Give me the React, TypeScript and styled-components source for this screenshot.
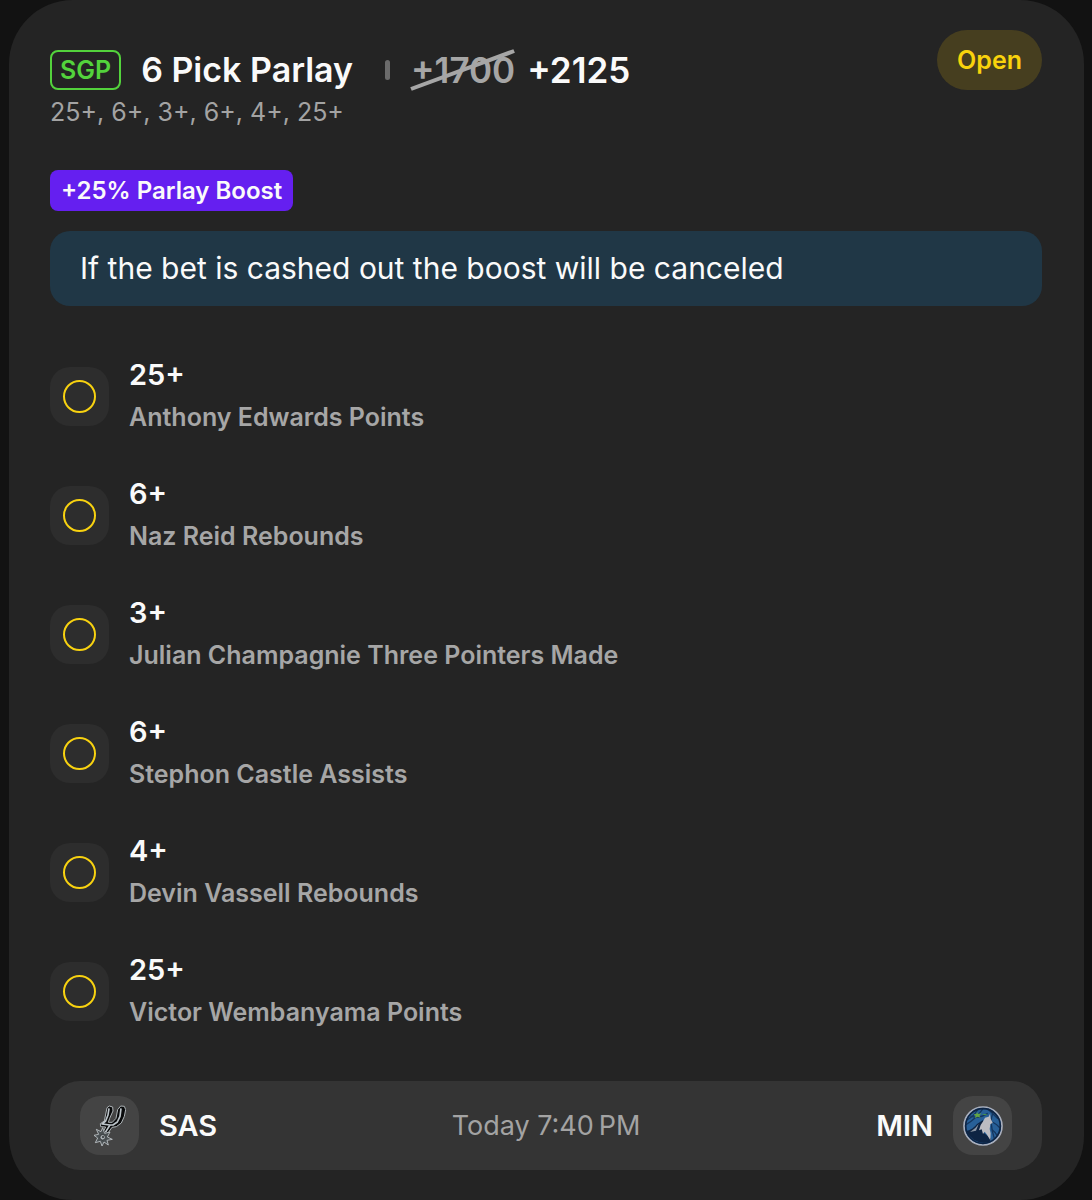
import React from "react";
import styled, { createGlobalStyle } from "styled-components";

const GlobalStyle = createGlobalStyle`
  * { box-sizing: border-box; }
  body {
    margin: 0;
    background: #121212;
    color: #fafafa;
    font-family: Inter, "Liberation Sans", sans-serif;
  }
  h1, h2, p, ul { margin: 0; padding: 0; font-size: inherit; font-weight: inherit; }
`;

const Card = styled.main`
  display: flex;
  flex-direction: column;
  margin: 0 8px 0 9px;
  padding: 30px 42px 30px 41px;
  border-radius: 64px;
  background: #242424;
`;

const Header = styled.header`
  display: flex;
  justify-content: space-between;
  align-items: flex-start;
`;

const Heading = styled.div`
  padding-top: 20px;
`;

const TitleRow = styled.div`
  display: flex;
  align-items: center;
  height: 40px;
`;

const SgpTag = styled.span`
  display: flex;
  align-items: center;
  height: 40px;
  margin-right: 20px;
  padding: 0 8px;
  border: 2px solid #53d33c;
  border-radius: 8px;
  color: #53d33c;
  font-size: 25px;
  font-weight: 600;
`;

const Title = styled.h1`
  font-size: 34px;
  font-weight: 600;
  line-height: 40px;
`;

const Divider = styled.span`
  width: 5px;
  height: 20px;
  margin: 0 21px 0 32px;
  border-radius: 3px;
  background: #6b6b6b;
`;

const Odds = styled.span`
  font-size: 35px;
  font-weight: 600;
  line-height: 40px;
`;

const OldOdds = styled.s`
  position: relative;
  margin-right: 12px;
  color: #a6a6a6;
  font-size: 35px;
  font-weight: 600;
  line-height: 40px;
  text-decoration: none;
`;

const Slash = styled.svg`
  position: absolute;
  inset: 0;
  width: 100%;
  height: 100%;
  overflow: visible;
`;

const Summary = styled.p`
  color: #a3a3a3;
  font-size: 25px;
  line-height: 44px;
`;

const Status = styled.span`
  padding: 0 20px;
  border-radius: 30px;
  background: #463e1f;
  color: #f8d20c;
  font-size: 25px;
  font-weight: 600;
  line-height: 60px;
`;

const Boost = styled.span`
  align-self: flex-start;
  margin-top: 36px;
  padding: 0 11px;
  border-radius: 8px;
  background: #651ff0;
  font-size: 24px;
  font-weight: 600;
  line-height: 41px;
`;

const Notice = styled.p`
  margin-top: 20px;
  padding: 15px 30px;
  border-radius: 20px;
  background: #203746;
  font-size: 30px;
  line-height: 45px;
`;

const Legs = styled.ul`
  display: flex;
  flex-direction: column;
  gap: 35px;
  margin: 48px 0;
  list-style: none;
`;

const Leg = styled.li`
  display: flex;
  align-items: center;
  gap: 20px;
`;

const Tile = styled.span<{ $raised?: boolean }>`
  display: flex;
  flex: none;
  align-items: center;
  justify-content: center;
  width: 59px;
  height: 59px;
  border-radius: 20px;
  background: ${(p) => (p.$raised ? "#444444" : "#2d2d2d")};
`;

const Ring = styled.span`
  width: 33px;
  height: 33px;
  border: 2px solid #f8d210;
  border-radius: 50%;
`;

const LegValue = styled.h2`
  font-size: 29px;
  font-weight: 600;
  line-height: 42px;
`;

const LegMarket = styled.p`
  color: #a6a6a6;
  font-size: 25px;
  font-weight: 600;
  line-height: 42px;
`;

const Game = styled.footer`
  display: grid;
  grid-template-columns: 1fr auto 1fr;
  align-items: center;
  padding: 15px 30px;
  border-radius: 30px;
  background: #343434;
`;

const Team = styled.div<{ $end?: boolean }>`
  display: flex;
  align-items: center;
  justify-content: ${(p) => (p.$end ? "flex-end" : "flex-start")};
  gap: 20px;
  font-size: 29px;
  font-weight: 600;
`;

const GameTime = styled.time`
  color: #a3a3a3;
  font-size: 27px;
`;

const SpursLogo = () => (
  <svg width="32" height="41" viewBox="0 0 96 123" aria-label="San Antonio Spurs" role="img">
    <path
      d="M39 8 46 3 56 6 57 18 47 40 43 52 55 52 66 40 71 14 80 3 91 4 95 14 91 34 82 54 67 65 54 67 39 88 26 84 35 66 20 65 19 56 31 48Z"
      fill="#090a0b"
      stroke="#aeb4b7"
      strokeWidth="3"
      strokeLinejoin="round"
    />
    <path
      d="M45 10 42 30 35 48 24 57 48 60 34 82M81 10 78 34 70 51 57 60 46 60"
      fill="none"
      stroke="#bdc5ca"
      strokeWidth="5"
      strokeLinejoin="round"
    />
    <path
      d="m26 68 6 17 16-4-8 15 15 7-16 3 4 14-13-9-6 12-5-14-15 4 7-14-11-8 14-3-7-15 14 7Z"
      fill="#4b5154"
      stroke="#c2c8cb"
      strokeWidth="2.5"
      strokeLinejoin="round"
    />
    <circle cx="26" cy="97" r="8" fill="#aab1b5" stroke="#25292b" strokeWidth="2" />
    <circle cx="27" cy="96" r="3" fill="#2b2f32" />
  </svg>
);

const WolvesLogo = () => (
  <svg width="40" height="40" viewBox="0 0 120 120" aria-label="Minnesota Timberwolves" role="img">
    <circle cx="60" cy="60" r="57" fill="#286098" stroke="#a9afbd" strokeWidth="5" />
    <path
      d="M12 42Q34 30 45 9M9 56Q40 38 60 8M22 30Q46 40 74 22M90 18Q78 48 94 98M88 48Q104 56 111 66M86 70Q98 80 102 88M74 8Q90 24 105 38"
      fill="none"
      stroke="#14365f"
      strokeWidth="4"
    />
    <path d="M10 75Q30 70 42 54L60 42 62 80 84 98 80 108Q32 118 10 75Z" fill="#0e2443" />
    <circle cx="60" cy="60" r="52" fill="none" stroke="#0e2443" strokeWidth="5" />
    <path
      d="M81 23 83 38 89 50 82 55 80 69 83 82 82 103 72 86 65 77 60 84 56 70 48 73 53 57 61 45 66 35 77 32Z"
      fill="#bcbcc2"
    />
    <path d="M21 78Q38 68 47 54L39 74Z" fill="#8c96a4" />
    <path d="m42 18 3 6 10-2-6 7 4 6-9-3-9 4 3-7-6-5 8 0Z" fill="#65a642" />
    <path d="M57 26Q66 22 73 26L67 28Z" fill="#4d9a49" />
  </svg>
);

const legs = [
  { value: "25+", market: "Anthony Edwards Points" },
  { value: "6+", market: "Naz Reid Rebounds" },
  { value: "3+", market: "Julian Champagnie Three Pointers Made" },
  { value: "6+", market: "Stephon Castle Assists" },
  { value: "4+", market: "Devin Vassell Rebounds" },
  { value: "25+", market: "Victor Wembanyama Points" },
];

export default function App() {
  return (
    <>
      <GlobalStyle />
      <Card>
        <Header>
          <Heading>
            <TitleRow>
              <SgpTag>SGP</SgpTag>
              <Title>6 Pick Parlay</Title>
              <Divider />
              <OldOdds>
                +1700
                <Slash viewBox="0 0 100 40" preserveAspectRatio="none" aria-hidden="true">
                  <path d="M0 39 99 1" stroke="#a6a6a6" strokeWidth="4" />
                </Slash>
              </OldOdds>
              <Odds>+2125</Odds>
            </TitleRow>
            <Summary>{legs.map((leg) => leg.value).join(", ")}</Summary>
          </Heading>
          <Status>Open</Status>
        </Header>
        <Boost>+25% Parlay Boost</Boost>
        <Notice>If the bet is cashed out the boost will be canceled</Notice>
        <Legs>
          {legs.map((leg) => (
            <Leg key={leg.market}>
              <Tile>
                <Ring />
              </Tile>
              <div>
                <LegValue>{leg.value}</LegValue>
                <LegMarket>{leg.market}</LegMarket>
              </div>
            </Leg>
          ))}
        </Legs>
        <Game>
          <Team>
            <Tile $raised>
              <SpursLogo />
            </Tile>
            SAS
          </Team>
          <GameTime>Today 7:40{"\u202f"}PM</GameTime>
          <Team $end>
            MIN
            <Tile $raised>
              <WolvesLogo />
            </Tile>
          </Team>
        </Game>
      </Card>
    </>
  );
}
